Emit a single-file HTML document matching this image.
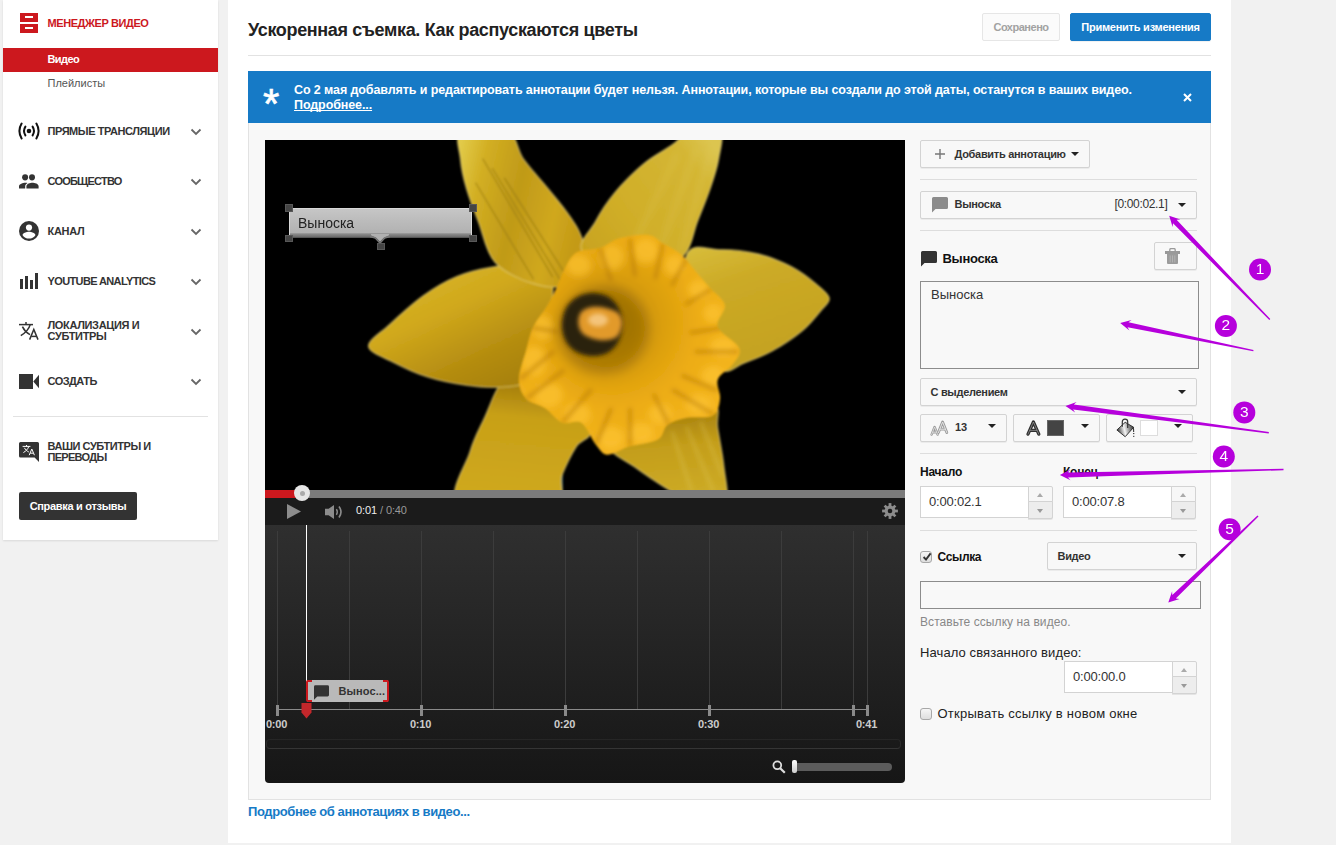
<!DOCTYPE html>
<html lang="ru">
<head>
<meta charset="utf-8">
<title>Аннотации</title>
<style>
*{box-sizing:border-box;margin:0;padding:0}
html,body{width:1336px;height:845px;overflow:hidden}
body{background:#f1f1f1;font-family:"Liberation Sans",sans-serif;font-size:13px;color:#333;position:relative}
.abs{position:absolute}
/* sidebar */
#side{position:absolute;left:3px;top:0;width:215px;height:540px;background:#fff;box-shadow:0 1px 2px rgba(0,0,0,.1)}
.sitem{position:absolute;left:44.5px;font-size:11px;font-weight:bold;color:#333;white-space:nowrap;line-height:11px;letter-spacing:-0.1px}
.sico{position:absolute;left:16px}
.chev{position:absolute;left:187px;width:12px;height:8px}
/* main */
#main{position:absolute;left:228px;top:0;width:1003px;height:843px;background:#fff}
h1{position:absolute;left:20px;top:19px;letter-spacing:-0.34px;font-size:18px;font-weight:bold;color:#222;white-space:nowrap;line-height:22px}
.btn{position:absolute;border:1px solid #d3d3d3;border-radius:2px;background:#f8f8f8;font-size:11px;font-weight:bold;color:#333;white-space:nowrap;box-shadow:0 1px 0 rgba(0,0,0,.05)}
.tri{position:absolute;width:0;height:0;border-left:4px solid transparent;border-right:4px solid transparent;border-top:4px solid #222}
.hr{position:absolute;height:1px;background:#ddd}

#banner{position:absolute;left:20px;top:71px;width:963px;height:52px;background:#167ac6}
#panel{position:absolute;left:20px;top:123px;width:963px;height:677px;background:#f8f8f8;border:1px solid #e2e2e2;border-top:none}

.bt{font-size:11px;font-weight:bold;line-height:13px;color:#333;white-space:nowrap}
.cb{width:12px;height:12px;border:1px solid #a8a8a8;border-radius:3px;background:linear-gradient(#f6f6f6,#dedede)}

#vid{position:absolute;left:265px;top:140px;width:640px;height:350px;background:#000;overflow:hidden}
#prog{position:absolute;left:265px;top:490px;width:640px;height:8px;background:#7b7b7b;z-index:3}
#ctl{position:absolute;left:265px;top:498px;width:640px;height:27px;background:#1b1b1b}
#tline{position:absolute;left:265px;top:525px;width:640px;height:258px;background:linear-gradient(#2f2f2f 0%,#232323 50%,#161616 100%);border-radius:0 0 4px 4px}
.tl{font-size:11px;font-weight:bold;line-height:13px;color:#ccc;text-align:center;white-space:nowrap;letter-spacing:-0.2px}
</style>
</head>
<body>
<div id="side">
<svg class="sico" style="left:17px;top:13px" width="18" height="20" viewBox="0 0 18 20"><rect x="0" y="0" width="18" height="9" fill="#cc181e"/><rect x="0" y="11" width="18" height="9" fill="#cc181e"/><rect x="5" y="3" width="8" height="2" fill="#fff"/><rect x="5" y="14" width="8" height="2" fill="#fff"/></svg>
<div class="sitem" style="letter-spacing:-0.42px;top:18px;color:#cc181e">МЕНЕДЖЕР ВИДЕО</div>
<div class="abs" style="left:0;top:48px;width:215px;height:24px;background:#cc181e"></div>
<div class="abs" style="left:44.5px;top:53px;font-size:11px;font-weight:bold;color:#fff;line-height:13px;letter-spacing:-0.6px">Видео</div>
<div class="abs" style="left:44.5px;top:77px;font-size:11px;color:#555;line-height:13px">Плейлисты</div>

<svg class="sico" style="left:15px;top:122px" width="22" height="18" viewBox="0 0 22 18"><g fill="none" stroke="#111" stroke-width="2" stroke-linecap="round"><path d="M3.6 1.6 Q-0.8 9 3.6 16.4"/><path d="M7.4 4.6 Q4.6 9 7.4 13.4"/><path d="M14.6 4.6 Q17.4 9 14.6 13.4"/><path d="M18.4 1.6 Q22.8 9 18.4 16.4"/></g><circle cx="11" cy="9" r="2.3" fill="#111"/></svg>
<div class="sitem" style="letter-spacing:-0.42px;top:126px">ПРЯМЫЕ ТРАНСЛЯЦИИ</div>
<svg class="chev" style="top:128px" viewBox="0 0 12 8"><path d="M1.5 1.5 L6 6 L10.5 1.5" fill="none" stroke="#666" stroke-width="1.8"/></svg>

<svg class="sico" style="left:16px;top:173.5px" width="20" height="15" viewBox="0 0 20 14.4" preserveAspectRatio="none"><g fill="#333"><circle cx="6.1" cy="3.2" r="3"/><circle cx="13" cy="3.2" r="3"/><path d="M0 14 v-2.2 c0-2.2 4-3.4 6.2-3.4 c0.8 0 1.6 0.1 2.4 0.3 c-1.6 0.9-2.4 1.9-2.4 3.1 V14z"/><path d="M7.4 14 v-2.4 c0-2.2 3.9-3.3 6-3.3 s6.2 1.1 6.2 3.3 V14z"/></g></svg>
<div class="sitem" style="letter-spacing:-0.78px;top:176px">СООБЩЕСТВО</div>
<svg class="chev" style="top:178px" viewBox="0 0 12 8"><path d="M1.5 1.5 L6 6 L10.5 1.5" fill="none" stroke="#666" stroke-width="1.8"/></svg>

<svg class="sico" style="left:16px;top:221px" width="20" height="20" viewBox="0 0 20 20"><circle cx="10" cy="10" r="10" fill="#333"/><circle cx="10" cy="6.6" r="3.1" fill="#fff"/><path d="M3.6 14.2 c0-2.2 4.2-3.4 6.4-3.4 s6.4 1.2 6.4 3.4 c-1.4 2.1-3.7 3.4-6.4 3.4 s-5-1.3-6.4-3.4z" fill="#fff"/></svg>
<div class="sitem" style="letter-spacing:-0.32px;top:226px">КАНАЛ</div>
<svg class="chev" style="top:228px" viewBox="0 0 12 8"><path d="M1.5 1.5 L6 6 L10.5 1.5" fill="none" stroke="#666" stroke-width="1.8"/></svg>

<svg class="sico" style="left:17px;top:273px" width="18" height="16" viewBox="0 0 18 16"><g fill="#333"><rect x="0" y="6" width="3" height="10"/><rect x="5" y="3" width="3" height="13"/><rect x="10" y="7" width="3" height="9"/><rect x="15" y="0" width="3" height="16"/></g></svg>
<div class="sitem" style="letter-spacing:-0.62px;top:276px">YOUTUBE ANALYTICS</div>
<svg class="chev" style="top:278px" viewBox="0 0 12 8"><path d="M1.5 1.5 L6 6 L10.5 1.5" fill="none" stroke="#666" stroke-width="1.8"/></svg>

<svg class="sico" style="left:16px;top:322px" width="20" height="18" viewBox="0 0 20 18"><g fill="none" stroke="#333" stroke-width="1.5"><path d="M0 2.6 H14"/><path d="M7 0 V2.6"/><path d="M11.2 2.6 C10 7 6 11 1.8 13.6"/><path d="M3.4 4.6 C5 8 8 11 11 12.6"/><path d="M10.6 17.6 L14.8 7.4 L19 17.6"/><path d="M12.2 14.4 H17.4"/></g></svg>
<div class="sitem" style="letter-spacing:-0.35px;top:320px;line-height:11px">ЛОКАЛИЗАЦИЯ И<br>СУБТИТРЫ</div>
<svg class="chev" style="top:328px" viewBox="0 0 12 8"><path d="M1.5 1.5 L6 6 L10.5 1.5" fill="none" stroke="#666" stroke-width="1.8"/></svg>

<svg class="sico" style="left:16px;top:374px" width="20" height="15" viewBox="0 0 20 15"><rect x="0" y="0" width="14" height="15" fill="#333"/><path d="M14.3 7.5 L20 0.8 V14.2z" fill="#333"/></svg>
<div class="sitem" style="letter-spacing:-0.52px;top:376px">СОЗДАТЬ</div>
<svg class="chev" style="top:378px" viewBox="0 0 12 8"><path d="M1.5 1.5 L6 6 L10.5 1.5" fill="none" stroke="#666" stroke-width="1.8"/></svg>

<div class="hr" style="left:10px;top:416px;width:195px;background:#e2e2e2"></div>

<svg class="sico" style="left:16px;top:442px" width="20" height="20" viewBox="0 0 20 20"><path d="M1.5 0 H18.5 Q20 0 20 1.5 V20 L15.6 15.6 H1.5 Q0 15.6 0 14.1 V1.5 Q0 0 1.5 0z" fill="#333"/><g fill="none" stroke="#fff" stroke-width="1"><path d="M3.6 4.4 H11.4"/><path d="M7.5 3 V4.4"/><path d="M9.8 4.4 C9 7 7 9 4.4 10.6"/><path d="M5.4 5.8 C6.4 7.6 8 9.2 9.8 10"/><path d="M10.2 13.2 L12.8 7 L15.4 13.2"/><path d="M11.2 11.2 H14.4"/></g></svg>
<div class="sitem" style="letter-spacing:-0.45px;top:441px;line-height:11px">ВАШИ СУБТИТРЫ И<br><span style="letter-spacing:-0.7px">ПЕРЕВОДЫ</span></div>

<div class="abs" style="left:16px;top:492px;width:118px;height:28px;background:#333;border-radius:2px;color:#fff;font-size:11px;font-weight:bold;line-height:28px;text-align:center;white-space:nowrap;letter-spacing:-0.3px">Справка и отзывы</div>
</div>
<div id="main">
<h1>Ускоренная съемка. Как распускаются цветы</h1>
<div class="btn" style="left:754px;top:13px;width:78px;height:28px;line-height:26px;text-align:center;color:#a2a2a2;letter-spacing:-0.48px;font-weight:bold;background:#fbfbfb;border-color:#e6e6e6;box-shadow:none">Сохранено</div>
<div class="btn" style="left:842px;top:13px;width:141px;height:28px;line-height:26px;text-align:center;color:#fff;letter-spacing:-0.24px;background:#167ac6;border-color:#167ac6">Применить изменения</div>
<div class="hr" style="left:20px;top:55px;width:963px;background:#e2e2e2"></div>
<div id="banner">
<div class="abs" style="left:15px;top:11px;font-size:42px;font-weight:normal;line-height:44px;color:#fff;-webkit-text-stroke:0.6px #fff">*</div>
<div class="abs" style="left:46px;top:12px;font-size:12.5px;letter-spacing:-0.1px;font-weight:bold;line-height:15px;color:#fff;white-space:nowrap">Со 2 мая добавлять и редактировать аннотации будет нельзя. Аннотации, которые вы создали до этой даты, останутся в ваших видео.<br><span style="text-decoration:underline;text-decoration-skip-ink:none;text-underline-offset:1px">Подробнее...</span></div>
<svg class="abs" style="left:935px;top:22px" width="9" height="9" viewBox="0 0 9 9"><path d="M1 1 L8 8 M8 1 L1 8" stroke="#fff" stroke-width="2"/></svg>
</div>
<div id="panel">
</div>
<div class="abs" style="left:20px;top:804px;font-size:13px;font-weight:bold;color:#167ac6;white-space:nowrap;line-height:15px;letter-spacing:-0.4px">Подробнее об аннотациях в видео...</div>
</div>


<div id="vid">
<svg class="abs" style="left:0;top:0" width="640" height="350" viewBox="0 0 640 350">
<defs>
<filter id="fb" x="-5%" y="-5%" width="110%" height="110%"><feGaussianBlur stdDeviation="0.9"/></filter>
<filter id="fb3" x="-30%" y="-30%" width="160%" height="160%"><feGaussianBlur stdDeviation="6"/></filter>
<filter id="fb2" x="-20%" y="-20%" width="140%" height="140%"><feGaussianBlur stdDeviation="2"/></filter>
<filter id="fb4" x="-20%" y="-20%" width="140%" height="140%"><feGaussianBlur stdDeviation="3.2"/></filter>
<linearGradient id="g1" x1="0" y1="0.2" x2="1" y2="0.5"><stop offset="0" stop-color="#e2ca48"/><stop offset="0.2" stop-color="#d2ae22"/><stop offset="0.5" stop-color="#c09a18"/><stop offset="0.8" stop-color="#d0a81e"/><stop offset="1" stop-color="#c49a16"/></linearGradient>
<linearGradient id="g2" x1="0" y1="1" x2="1" y2="0.2"><stop offset="0" stop-color="#c6a01c"/><stop offset="0.4" stop-color="#d0ae28"/><stop offset="0.85" stop-color="#d4b634"/><stop offset="1" stop-color="#dcc550"/></linearGradient>
<linearGradient id="g3" x1="0" y1="0" x2="0.4" y2="1"><stop offset="0" stop-color="#d8be3c"/><stop offset="0.35" stop-color="#ccaa26"/><stop offset="1" stop-color="#c4a220"/></linearGradient>
<linearGradient id="g4" x1="0" y1="0" x2="0.7" y2="1"><stop offset="0" stop-color="#dcbc2e"/><stop offset="0.45" stop-color="#d0a81c"/><stop offset="0.8" stop-color="#b48c10"/><stop offset="1" stop-color="#a8820e"/></linearGradient>
<linearGradient id="g5" x1="0.3" y1="0" x2="0.2" y2="1"><stop offset="0" stop-color="#9c7608"/><stop offset="0.3" stop-color="#c8a018"/><stop offset="1" stop-color="#d0aa1e"/></linearGradient>
<linearGradient id="g6" x1="0.5" y1="0" x2="0.6" y2="1"><stop offset="0" stop-color="#a07a0a"/><stop offset="0.4" stop-color="#c49e1a"/><stop offset="1" stop-color="#cfae2a"/></linearGradient>
<radialGradient id="gc" cx="0.42" cy="0.40" r="0.62"><stop offset="0" stop-color="#ac7c08"/><stop offset="0.3" stop-color="#d69b0c"/><stop offset="0.62" stop-color="#ecac14"/><stop offset="1" stop-color="#f5b620"/></radialGradient>
<clipPath id="vc"><rect width="640" height="350"/></clipPath>
<clipPath id="cc"><path d="M293.2 143.7 C296.0 137.7 296.4 134.5 299.4 129.3 C302.4 124.2 305.4 116.2 311.4 112.6 C317.4 109.0 328.1 110.2 335.3 107.8 C342.5 105.4 346.5 100.4 354.5 98.2 C362.5 96.0 376.0 94.1 383.2 94.9 C390.4 95.6 392.0 99.6 397.6 103.0 C403.2 106.3 411.2 110.2 416.8 115.0 C422.4 119.8 426.3 126.1 431.1 131.7 C435.9 137.3 440.7 142.9 445.5 148.5 C450.3 154.1 458.7 158.9 459.9 165.3 C461.1 171.7 450.3 179.6 452.7 186.8 C455.1 194.0 471.9 202.0 474.3 208.4 C476.6 214.8 470.7 220.0 467.1 225.1 C463.5 230.3 454.7 233.9 452.7 239.5 C450.7 245.1 455.9 252.7 455.1 258.7 C454.3 264.7 453.5 272.3 447.9 275.4 C442.3 278.6 429.1 276.2 421.6 277.8 C414.0 279.4 407.2 281.4 402.4 285.0 C397.6 288.6 399.2 295.8 392.8 299.4 C386.4 303.0 372.5 304.0 364.1 306.6 C355.7 309.1 348.1 315.1 342.5 314.7 C336.9 314.3 334.9 309.5 330.5 304.2 C326.1 298.8 321.8 286.2 316.2 282.6 C310.6 279.0 303.0 285.0 297.0 282.6 C291.0 280.2 286.2 272.3 280.2 268.3 C274.3 264.3 265.5 263.5 261.1 258.7 C256.7 253.9 253.9 247.5 253.9 239.5 C253.9 231.5 258.7 219.6 261.1 210.8 C263.5 202.0 264.7 194.4 268.3 186.8 C271.9 179.2 278.5 172.5 282.6 165.3 C286.8 158.1 290.4 149.7 293.2 143.7z"/></clipPath>
<clipPath id="c1"><path d="M196.4 -9.6 C188.7 -4.8 194.7 9.6 195.4 19.2 C196.2 28.7 198.2 37.5 201.2 47.9 C204.2 58.3 208.4 69.1 213.2 81.4 C218.0 93.8 220.8 111.8 229.9 122.2 C239.1 132.5 256.3 140.1 268.3 143.7 C280.2 147.3 293.7 149.3 301.8 143.7 C309.9 138.1 314.9 118.6 317.1 110.2 C319.4 101.8 317.8 99.8 315.2 93.4 C312.7 87.0 307.2 79.4 301.8 71.9 C296.4 64.3 289.8 56.7 282.6 47.9 C275.4 39.1 265.5 28.7 258.7 19.2 C251.9 9.6 252.3 -4.8 241.9 -9.6 C231.5 -14.4 204.2 -14.4 196.4 -9.6z"/></clipPath>
<clipPath id="c6"><path d="M344.9 306.6 C343.7 313.4 360.9 320.6 371.3 328.1 C381.6 335.7 396.4 345.3 407.2 352.1 C418.0 358.9 427.0 366.9 435.9 368.9 C444.9 370.9 457.0 371.3 460.8 364.1 C464.7 356.9 460.3 338.5 458.9 325.7 C457.6 313.0 454.1 297.4 452.7 287.4 C451.3 277.4 456.3 269.1 450.3 265.9 C444.3 262.7 428.7 264.7 416.8 268.3 C404.8 271.9 390.4 281.0 378.4 287.4 C366.5 293.8 346.1 299.8 344.9 306.6z"/></clipPath>
<clipPath id="c2"><path d="M318.6 112.6 C309.8 103.8 325.3 91.4 330.5 81.4 C335.7 71.5 341.7 62.3 349.7 52.7 C357.7 43.1 368.9 31.9 378.4 24.0 C388.0 16.0 399.2 10.4 407.2 4.8 C415.2 -0.8 418.4 -7.2 426.3 -9.6 C434.3 -12.0 450.5 -14.4 455.1 -9.6 C459.6 -4.8 455.2 9.6 453.7 19.2 C452.1 28.7 449.0 37.5 445.5 47.9 C442.0 58.3 437.0 70.3 432.6 81.4 C428.2 92.6 427.4 106.2 419.2 115.0 C410.9 123.8 400.0 134.5 383.2 134.1 C366.5 133.7 327.3 121.4 318.6 112.6z"/></clipPath>
</defs>
<rect width="640" height="350" fill="#000"/>
<g clip-path="url(#vc)"><g filter="url(#fb)">
<rect x="293" y="334" width="5" height="20" fill="#2a5562"/>
<path d="M237.1 241.9 C229.8 249.1 224.8 266.3 219.4 277.8 C214.1 289.4 209.3 297.0 205.0 311.4 C200.8 325.7 180.3 355.3 194.0 364.1 C207.7 372.9 270.3 368.9 287.4 364.1 C304.6 359.3 293.0 344.9 297.0 335.3 C301.0 325.7 306.7 313.9 311.4 306.6 C316.0 299.2 327.2 299.2 324.8 291.3 C322.4 283.3 307.2 268.1 297.0 258.7 C286.8 249.3 273.5 237.5 263.5 234.7 C253.5 231.9 244.5 234.7 237.1 241.9z" fill="url(#g5)" stroke="#e8d67e" stroke-opacity="0.55" stroke-width="1.3"/>
<path d="M344.9 306.6 C343.7 313.4 360.9 320.6 371.3 328.1 C381.6 335.7 396.4 345.3 407.2 352.1 C418.0 358.9 427.0 366.9 435.9 368.9 C444.9 370.9 457.0 371.3 460.8 364.1 C464.7 356.9 460.3 338.5 458.9 325.7 C457.6 313.0 454.1 297.4 452.7 287.4 C451.3 277.4 456.3 269.1 450.3 265.9 C444.3 262.7 428.7 264.7 416.8 268.3 C404.8 271.9 390.4 281.0 378.4 287.4 C366.5 293.8 346.1 299.8 344.9 306.6z" fill="url(#g6)" stroke="#e8d67e" stroke-opacity="0.55" stroke-width="1.3"/>
<g clip-path="url(#c6)" filter="url(#fb2)"><path d="M421.6 287.4 L447.9 350.2" stroke="#e2cc5c" stroke-width="2.4" stroke-opacity="0.45" stroke-linecap="round" fill="none"/><path d="M407.2 292.2 L426.3 350.2" stroke="#e2cc5c" stroke-width="2.4" stroke-opacity="0.45" stroke-linecap="round" fill="none"/><path d="M435.9 282.6 L457.5 335.3" stroke="#e2cc5c" stroke-width="2.4" stroke-opacity="0.45" stroke-linecap="round" fill="none"/></g>
<path d="M103.5 206.5 C102.7 200.1 115.4 192.9 124.6 184.4 C133.7 176.0 146.9 163.7 158.1 155.7 C169.3 147.7 180.4 141.2 191.6 136.5 C202.8 131.8 214.0 129.3 225.1 127.4 C236.3 125.6 248.3 123.2 258.7 125.5 C269.1 127.8 284.2 128.7 287.4 141.3 C290.6 153.9 281.8 184.8 277.8 201.2 C273.9 217.6 270.7 231.9 263.5 239.5 C256.3 247.2 245.1 246.2 234.7 247.2 C224.4 248.1 213.2 246.9 201.2 245.3 C189.2 243.6 174.9 240.9 162.9 237.1 C150.9 233.4 139.2 227.9 129.3 222.8 C119.4 217.6 104.3 212.9 103.5 206.5z" fill="url(#g4)" stroke="#e8d67e" stroke-opacity="0.55" stroke-width="1.3"/>
<path d="M421.6 115.0 C427.1 101.3 443.1 109.9 455.1 109.7 C467.1 109.5 481.4 111.1 493.4 114.0 C505.4 116.9 517.4 122.0 526.9 126.9 C536.5 131.9 544.7 138.5 550.9 143.7 C557.1 148.9 563.5 153.5 564.3 158.1 C565.1 162.6 560.3 165.4 555.7 171.0 C551.1 176.6 544.5 185.0 536.5 191.6 C528.5 198.2 517.4 205.5 507.8 210.8 C498.2 216.0 487.8 220.0 479.0 223.2 C470.3 226.4 464.7 235.2 455.1 229.9 C445.5 224.7 427.1 210.8 421.6 191.6 C416.0 172.5 416.0 128.6 421.6 115.0z" fill="url(#g3)" stroke="#e8d67e" stroke-opacity="0.55" stroke-width="1.3"/>
<path d="M196.4 -9.6 C188.7 -4.8 194.7 9.6 195.4 19.2 C196.2 28.7 198.2 37.5 201.2 47.9 C204.2 58.3 208.4 69.1 213.2 81.4 C218.0 93.8 220.8 111.8 229.9 122.2 C239.1 132.5 256.3 140.1 268.3 143.7 C280.2 147.3 293.7 149.3 301.8 143.7 C309.9 138.1 314.9 118.6 317.1 110.2 C319.4 101.8 317.8 99.8 315.2 93.4 C312.7 87.0 307.2 79.4 301.8 71.9 C296.4 64.3 289.8 56.7 282.6 47.9 C275.4 39.1 265.5 28.7 258.7 19.2 C251.9 9.6 252.3 -4.8 241.9 -9.6 C231.5 -14.4 204.2 -14.4 196.4 -9.6z" fill="url(#g1)" stroke="#e8d67e" stroke-opacity="0.55" stroke-width="1.3"/>
<g clip-path="url(#c1)"><path d="M218.0 19.2 L287.4 136.5" stroke="#8f7410" stroke-width="1.6" stroke-opacity="0.5" stroke-linecap="round" fill="none"/><path d="M227.5 28.7 L294.6 138.9" stroke="#8f7410" stroke-width="1.6" stroke-opacity="0.5" stroke-linecap="round" fill="none"/><path d="M239.5 38.3 L301.8 136.5" stroke="#8f7410" stroke-width="1.6" stroke-opacity="0.5" stroke-linecap="round" fill="none"/><path d="M210.8 43.1 L268.3 138.9" stroke="#8f7410" stroke-width="1.6" stroke-opacity="0.5" stroke-linecap="round" fill="none"/></g>
<path d="M318.6 112.6 C309.8 103.8 325.3 91.4 330.5 81.4 C335.7 71.5 341.7 62.3 349.7 52.7 C357.7 43.1 368.9 31.9 378.4 24.0 C388.0 16.0 399.2 10.4 407.2 4.8 C415.2 -0.8 418.4 -7.2 426.3 -9.6 C434.3 -12.0 450.5 -14.4 455.1 -9.6 C459.6 -4.8 455.2 9.6 453.7 19.2 C452.1 28.7 449.0 37.5 445.5 47.9 C442.0 58.3 437.0 70.3 432.6 81.4 C428.2 92.6 427.4 106.2 419.2 115.0 C410.9 123.8 400.0 134.5 383.2 134.1 C366.5 133.7 327.3 121.4 318.6 112.6z" fill="url(#g2)" stroke="#e8d67e" stroke-opacity="0.55" stroke-width="1.3"/>
<g clip-path="url(#c2)" filter="url(#fb4)"><path d="M445.5 9.6 L416.8 110.2" stroke="#e3cf62" stroke-width="3" stroke-opacity="0.35" stroke-linecap="round" fill="none"/><path d="M431.1 9.6 L392.8 115.0" stroke="#e3cf62" stroke-width="3" stroke-opacity="0.35" stroke-linecap="round" fill="none"/><path d="M412.0 14.4 L364.1 115.0" stroke="#e3cf62" stroke-width="3" stroke-opacity="0.35" stroke-linecap="round" fill="none"/></g>
<path d="M293.2 143.7 C296.0 137.7 296.4 134.5 299.4 129.3 C302.4 124.2 305.4 116.2 311.4 112.6 C317.4 109.0 328.1 110.2 335.3 107.8 C342.5 105.4 346.5 100.4 354.5 98.2 C362.5 96.0 376.0 94.1 383.2 94.9 C390.4 95.6 392.0 99.6 397.6 103.0 C403.2 106.3 411.2 110.2 416.8 115.0 C422.4 119.8 426.3 126.1 431.1 131.7 C435.9 137.3 440.7 142.9 445.5 148.5 C450.3 154.1 458.7 158.9 459.9 165.3 C461.1 171.7 450.3 179.6 452.7 186.8 C455.1 194.0 471.9 202.0 474.3 208.4 C476.6 214.8 470.7 220.0 467.1 225.1 C463.5 230.3 454.7 233.9 452.7 239.5 C450.7 245.1 455.9 252.7 455.1 258.7 C454.3 264.7 453.5 272.3 447.9 275.4 C442.3 278.6 429.1 276.2 421.6 277.8 C414.0 279.4 407.2 281.4 402.4 285.0 C397.6 288.6 399.2 295.8 392.8 299.4 C386.4 303.0 372.5 304.0 364.1 306.6 C355.7 309.1 348.1 315.1 342.5 314.7 C336.9 314.3 334.9 309.5 330.5 304.2 C326.1 298.8 321.8 286.2 316.2 282.6 C310.6 279.0 303.0 285.0 297.0 282.6 C291.0 280.2 286.2 272.3 280.2 268.3 C274.3 264.3 265.5 263.5 261.1 258.7 C256.7 253.9 253.9 247.5 253.9 239.5 C253.9 231.5 258.7 219.6 261.1 210.8 C263.5 202.0 264.7 194.4 268.3 186.8 C271.9 179.2 278.5 172.5 282.6 165.3 C286.8 158.1 290.4 149.7 293.2 143.7z" fill="url(#gc)"/>
<g clip-path="url(#cc)"><g filter="url(#fb4)"><ellipse cx="313.8" cy="125.5" rx="12.5" ry="10.5" fill="#ffc636" fill-opacity="0.6"/><ellipse cx="347.3" cy="117.4" rx="11.5" ry="12.5" fill="#ffc636" fill-opacity="0.6"/><ellipse cx="380.8" cy="111.1" rx="12.5" ry="12.5" fill="#ffc636" fill-opacity="0.6"/><ellipse cx="409.6" cy="125.5" rx="10.5" ry="10.5" fill="#ffc636" fill-opacity="0.6"/><ellipse cx="433.5" cy="149.5" rx="10.5" ry="9.6" fill="#ffc636" fill-opacity="0.6"/><ellipse cx="447.9" cy="173.4" rx="9.6" ry="9.6" fill="#ffc636" fill-opacity="0.6"/><ellipse cx="457.5" cy="206.9" rx="12.5" ry="9.6" fill="#ffc636" fill-opacity="0.6"/><ellipse cx="447.9" cy="235.7" rx="11.5" ry="9.6" fill="#ffc636" fill-opacity="0.6"/><ellipse cx="433.5" cy="264.4" rx="12.5" ry="9.6" fill="#ffc636" fill-opacity="0.6"/><ellipse cx="395.2" cy="274.0" rx="11.5" ry="10.5" fill="#ffc636" fill-opacity="0.6"/><ellipse cx="376.0" cy="293.2" rx="12.5" ry="10.5" fill="#ffc636" fill-opacity="0.6"/><ellipse cx="345.9" cy="298.0" rx="12.5" ry="11.5" fill="#ffc636" fill-opacity="0.6"/><ellipse cx="312.3" cy="274.0" rx="13.4" ry="11.5" fill="#ffc636" fill-opacity="0.6"/><ellipse cx="283.6" cy="254.9" rx="14.4" ry="12.5" fill="#ffc636" fill-opacity="0.6"/><ellipse cx="269.2" cy="221.3" rx="12.5" ry="15.3" fill="#ffc636" fill-opacity="0.6"/><ellipse cx="277.8" cy="187.8" rx="10.5" ry="12.5" fill="#ffc636" fill-opacity="0.6"/></g><g filter="url(#fb2)"><path d="M335.3 109.2 L345.9 139.9" stroke="#a86c04" stroke-width="3.2" stroke-opacity="0.55" stroke-linecap="round" fill="none"/><path d="M365.0 99.6 L369.8 135.1" stroke="#a86c04" stroke-width="3.2" stroke-opacity="0.55" stroke-linecap="round" fill="none"/><path d="M397.6 104.4 L390.4 138.0" stroke="#a86c04" stroke-width="3.2" stroke-opacity="0.55" stroke-linecap="round" fill="none"/><path d="M421.6 118.8 L407.2 144.7" stroke="#a86c04" stroke-width="3.2" stroke-opacity="0.55" stroke-linecap="round" fill="none"/><path d="M445.5 149.5 L421.6 163.8" stroke="#a86c04" stroke-width="3.2" stroke-opacity="0.55" stroke-linecap="round" fill="none"/><path d="M457.5 187.8 L426.3 192.6" stroke="#a86c04" stroke-width="3.2" stroke-opacity="0.55" stroke-linecap="round" fill="none"/><path d="M471.9 211.7 L431.1 211.7" stroke="#a86c04" stroke-width="3.2" stroke-opacity="0.55" stroke-linecap="round" fill="none"/><path d="M451.3 250.1 L417.7 235.7" stroke="#a86c04" stroke-width="3.2" stroke-opacity="0.55" stroke-linecap="round" fill="none"/><path d="M447.9 274.0 L408.1 250.1" stroke="#a86c04" stroke-width="3.2" stroke-opacity="0.55" stroke-linecap="round" fill="none"/><path d="M403.4 283.6 L389.0 254.9" stroke="#a86c04" stroke-width="3.2" stroke-opacity="0.55" stroke-linecap="round" fill="none"/><path d="M365.0 305.6 L365.0 269.2" stroke="#a86c04" stroke-width="3.2" stroke-opacity="0.55" stroke-linecap="round" fill="none"/><path d="M331.5 302.8 L345.9 269.2" stroke="#a86c04" stroke-width="3.2" stroke-opacity="0.55" stroke-linecap="round" fill="none"/><path d="M298.0 281.7 L325.7 250.1" stroke="#a86c04" stroke-width="3.2" stroke-opacity="0.55" stroke-linecap="round" fill="none"/><path d="M262.5 257.7 L298.0 230.9" stroke="#a86c04" stroke-width="3.2" stroke-opacity="0.55" stroke-linecap="round" fill="none"/><path d="M255.8 238.6 L288.4 211.7" stroke="#a86c04" stroke-width="3.2" stroke-opacity="0.55" stroke-linecap="round" fill="none"/><path d="M268.3 187.8 L292.2 191.6" stroke="#a86c04" stroke-width="3.2" stroke-opacity="0.55" stroke-linecap="round" fill="none"/></g>
<ellipse cx="338" cy="190" rx="46" ry="44" fill="#8a6206" fill-opacity="0.55" filter="url(#fb3)"/>
</g>
</g>
<path d="M327 153 C345 152 358 166 357 186 C356 206 344 217 326 216 C308 215 296 202 297 183 C298 165 310 154 327 153z" fill="#2a2008" filter="url(#fb2)"/>
<path d="M316 172 C324 164 340 166 352 172 C360 178 358 190 352 197 C342 203 326 200 318 194 C312 188 312 178 316 172z" fill="#e29a2c" filter="url(#fb2)"/>
<ellipse cx="333" cy="180" rx="10" ry="6.5" fill="#f4c47a" filter="url(#fb2)"/>
</g>
</svg>
<div class="abs" style="left:24px;top:68px;width:183px;height:30px;border-radius:3px;background:linear-gradient(#c6c6c6 0%,#bcbcbc 40%,#b2b2b2 84%,#8c8c8c 89%,#6a6a6a 100%);border:1px solid #d8d8d8;border-bottom-color:#555"></div>
<svg class="abs" style="left:104.3px;top:94px" width="22" height="10" viewBox="0 0 22 10"><path d="M2 0 H20 V1.2 L15.2 3.4 L11 7.8 L6.8 3.4 L2 1.2z" fill="#b0b0b0"/><path d="M1 2.4 L6.4 4 L11 8.8 L15.6 4 L21 2.4" stroke="#787878" stroke-width="1.7" fill="none" stroke-linejoin="round"/></svg>
<div class="abs" style="left:33px;top:74px;font-size:14px;line-height:18px;color:#222;white-space:nowrap">Выноска</div>
<div class="abs" style="left:20px;top:64px;width:7.6px;height:7.6px;background:#444;border:1px solid #585858"></div><div class="abs" style="left:204px;top:64px;width:7.6px;height:7.6px;background:#444;border:1px solid #585858"></div><div class="abs" style="left:20px;top:94.5px;width:7.6px;height:7.6px;background:#444;border:1px solid #585858"></div><div class="abs" style="left:204px;top:94.5px;width:7.6px;height:7.6px;background:#444;border:1px solid #585858"></div><div class="abs" style="left:112px;top:102.5px;width:7.6px;height:7.6px;background:#444;border:1px solid #585858"></div>
</div>
<div id="prog"><div class="abs" style="left:0;top:0;width:32px;height:8px;background:#cc181e"></div>
<div class="abs" style="left:29px;top:-5px;width:16px;height:16px;border-radius:8px;background:#e6e6e6"></div>
<div class="abs" style="left:34.5px;top:0.5px;width:5px;height:5px;border-radius:3px;background:#aaa"></div>
</div>
<div id="ctl">
<svg class="abs" style="left:22px;top:6px" width="14" height="15" viewBox="0 0 14 15"><path d="M0 0 L14 7.5 L0 15z" fill="#8c8c8c"/></svg>
<svg class="abs" style="left:60px;top:7px" width="19" height="14" viewBox="0 0 19 14"><path d="M0 3.8 H3.6 L9 0 V14 L3.6 10.2 H0z" fill="#8c8c8c"/><path d="M11.4 4.2 Q13.2 7 11.4 9.8" fill="none" stroke="#8c8c8c" stroke-width="1.4"/><path d="M14 1.6 Q18 7 14 12.4" fill="none" stroke="#8c8c8c" stroke-width="1.6"/></svg>
<div class="abs" style="left:91px;top:6px;font-size:11px;line-height:13px;color:#eee;white-space:nowrap;letter-spacing:-0.1px">0:01 <span style="color:#999">/ 0:40</span></div>
<svg class="abs" style="left:617px;top:5px" width="16" height="16" viewBox="-8 -8 16 16"><g fill="#8c8c8c"><circle r="5.4"/><rect x="-1.4" y="-7.9" width="2.8" height="15.8"/><rect x="-7.9" y="-1.4" width="15.8" height="2.8"/><g transform="rotate(45)"><rect x="-1.4" y="-7.6" width="2.8" height="15.2"/><rect x="-7.6" y="-1.4" width="15.2" height="2.8"/></g></g><circle r="2.3" fill="#1b1b1b"/></svg>
</div>
<div id="tline">
<div class="abs" style="left:12px;top:6px;width:1px;height:179px;background:#3c3c3c"></div><div class="abs" style="left:84px;top:6px;width:1px;height:179px;background:#3c3c3c"></div><div class="abs" style="left:156px;top:6px;width:1px;height:179px;background:#3c3c3c"></div><div class="abs" style="left:228px;top:6px;width:1px;height:179px;background:#3c3c3c"></div><div class="abs" style="left:300px;top:6px;width:1px;height:179px;background:#3c3c3c"></div><div class="abs" style="left:372px;top:6px;width:1px;height:179px;background:#3c3c3c"></div><div class="abs" style="left:444px;top:6px;width:1px;height:179px;background:#3c3c3c"></div><div class="abs" style="left:516px;top:6px;width:1px;height:179px;background:#3c3c3c"></div><div class="abs" style="left:588px;top:6px;width:1px;height:179px;background:#3c3c3c"></div><div class="abs" style="left:602px;top:6px;width:1px;height:179px;background:#3c3c3c"></div>
<div class="abs" style="left:41px;top:0;width:1.3px;height:158px;background:#fff"></div>
<div class="abs" style="left:12px;top:184px;width:591px;height:1.3px;background:#8a8a8a"></div>
<div class="abs" style="left:11px;top:180px;width:3px;height:11px;background:#8a8a8a"></div><div class="abs" style="left:155px;top:180px;width:3px;height:11px;background:#8a8a8a"></div><div class="abs" style="left:299px;top:180px;width:3px;height:11px;background:#8a8a8a"></div><div class="abs" style="left:443px;top:180px;width:3px;height:11px;background:#8a8a8a"></div><div class="abs" style="left:587px;top:180px;width:3px;height:11px;background:#8a8a8a"></div><div class="abs" style="left:601px;top:180px;width:3px;height:11px;background:#8a8a8a"></div>
<div class="abs tl" style="top:193px;left:-8.5px;width:40px">0:00</div><div class="abs tl" style="top:193px;left:135.5px;width:40px">0:10</div><div class="abs tl" style="top:193px;left:279.5px;width:40px">0:20</div><div class="abs tl" style="top:193px;left:423.5px;width:40px">0:30</div><div class="abs tl" style="top:193px;left:581.5px;width:40px">0:41</div>
<div class="abs" style="left:41px;top:155px;width:83px;height:22px;background:#b9b9b9;border-radius:2px;border-left:2px solid #cc181e;border-right:2px solid #cc181e"></div>
<div class="abs" style="left:43px;top:155px;width:79px;height:22px;border-top:0;background:linear-gradient(90deg,#cc181e 4px,transparent 4px,transparent 75px,#cc181e 75px) top/100% 2px no-repeat,linear-gradient(90deg,#cc181e 4px,transparent 4px,transparent 75px,#cc181e 75px) bottom/100% 2px no-repeat"></div>
<svg class="abs" style="left:48.5px;top:159.5px" width="15" height="15" viewBox="0 0 16 15.5"><path d="M1.5 0 H14.5 Q16 0 16 1.5 V10.5 Q16 12 14.5 12 H3.5 L0 15.5 V1.5 Q0 0 1.5 0z" fill="#333"/></svg>
<div class="abs" style="left:73.5px;top:160px;font-size:11px;font-weight:bold;line-height:13px;color:#333;white-space:nowrap;letter-spacing:0.1px">Вынос...</div>
<svg class="abs" style="left:36px;top:177.5px" width="11" height="16" viewBox="0 0 11 16"><path d="M0.5 0 H10.5 V9.5 L5.5 15.5 L0.5 9.5z" fill="#c3272b"/></svg>
<div class="abs" style="left:1px;top:214px;width:635px;height:10px;border:1px solid #2c2c2c;border-top-color:#262626;border-bottom-color:#353535;border-radius:4px"></div>
<svg class="abs" style="left:507px;top:235px" width="14" height="14" viewBox="0 0 14 14"><circle cx="5.3" cy="5.3" r="3.9" fill="none" stroke="#ddd" stroke-width="1.8"/><path d="M8.2 8.2 L12.8 12.8" stroke="#ddd" stroke-width="2.2"/></svg>
<div class="abs" style="left:528px;top:237.5px;width:99px;height:8px;border-radius:4px;background:#5c5c5c"></div>
<div class="abs" style="left:526.5px;top:234.5px;width:5.5px;height:13px;border-radius:2px;background:linear-gradient(#fff,#ccc)"></div>
</div>
<div id="rp">
<div class="btn" style="left:920px;top:140px;width:170px;height:28px"></div>
<svg class="abs" style="left:935px;top:149px" width="10" height="10" viewBox="0 0 10 10"><path d="M5 0 V10 M0 5 H10" stroke="#777" stroke-width="1.4"/></svg>
<div class="abs bt" style="left:954.5px;top:148px;letter-spacing:-0.3px">Добавить аннотацию</div>
<div class="tri" style="left:1071px;top:151.5px"></div>
<div class="hr" style="left:920px;top:179px;width:277px"></div>

<div class="btn" style="left:920px;top:191px;width:277px;height:28px"></div>
<svg class="abs" style="left:932px;top:197px" width="16" height="15.5" viewBox="0 0 16 15.5"><path d="M1.5 0 H14.5 Q16 0 16 1.5 V10.5 Q16 12 14.5 12 H3.5 L0 15.5 V1.5 Q0 0 1.5 0z" fill="#8c8c8c"/></svg>
<div class="abs bt" style="left:954.5px;top:198px;letter-spacing:-0.3px">Выноска</div>
<div class="abs" style="left:1114.5px;top:196.5px;font-size:12px;line-height:14px;color:#333;white-space:nowrap;letter-spacing:-0.35px">[0:00:02.1]</div>
<div class="tri" style="left:1178px;top:203px"></div>
<div class="hr" style="left:920px;top:230px;width:277px"></div>

<svg class="abs" style="left:921px;top:251px" width="16" height="15.5" viewBox="0 0 16 15.5"><path d="M1.5 0 H14.5 Q16 0 16 1.5 V10.5 Q16 12 14.5 12 H3.5 L0 15.5 V1.5 Q0 0 1.5 0z" fill="#333"/></svg>
<div class="abs" style="left:942.5px;top:251px;font-size:13px;font-weight:bold;line-height:15px;color:#111;white-space:nowrap;letter-spacing:-0.3px">Выноска</div>
<div class="btn" style="left:1154px;top:242px;width:43px;height:28px"></div>
<svg class="abs" style="left:1165px;top:248px" width="15" height="16" viewBox="0 0 15 16"><path d="M4.8 3 V1.8 Q4.8 0.6 6 0.6 H9 Q10.2 0.6 10.2 1.8 V3" fill="none" stroke="#999" stroke-width="1.3"/><rect x="0" y="3" width="15" height="3" fill="#999"/><path d="M2 6 H13 V15 Q13 16 12 16 H3 Q2 16 2 15z" fill="#9b9b9b"/><path d="M5.2 7.4 V14.4 M7.5 7.4 V14.4 M9.8 7.4 V14.4" stroke="#b4b4b4" stroke-width="0.9"/></svg>

<div class="abs" style="left:920px;top:281px;width:279px;height:88px;border:1px solid #8c8c8c;background:#f8f8f8;font-size:13px;line-height:15px;padding:5px 0 0 10px;color:#333">Выноска</div>

<div class="btn" style="left:920px;top:378px;width:277px;height:28px"></div>
<div class="abs bt" style="left:930.5px;top:386px;letter-spacing:-0.3px">С выделением</div>
<div class="tri" style="left:1178px;top:390px"></div>

<div class="btn" style="left:920px;top:414px;width:87px;height:28px"></div>
<svg class="abs" style="left:930px;top:420px" width="20" height="16" viewBox="0 0 20 16"><g fill="none" stroke-linejoin="round" stroke-linecap="round"><path d="M1.6 14.6 L4.6 7 L7.6 14.6 M2.8 12.2 H6.4" stroke="#9a9a9a" stroke-width="2.4"/><path d="M8.4 12.6 L12.6 2 L16.8 12.6 M10 9.2 H15.2" stroke="#9a9a9a" stroke-width="2.8"/><path d="M1.6 14.6 L4.6 7 L7.6 14.6 M2.8 12.2 H6.4" stroke="#e4e4e4" stroke-width="0.8"/><path d="M8.4 12.6 L12.6 2 L16.8 12.6 M10 9.2 H15.2" stroke="#e4e4e4" stroke-width="1"/></g></svg>
<div class="abs" style="left:955px;top:421px;font-size:11px;line-height:13px;color:#333;font-weight:bold;letter-spacing:-0.2px">13</div>
<div class="tri" style="left:988px;top:424px"></div>

<div class="btn" style="left:1013px;top:414px;width:87px;height:28px"></div>
<svg class="abs" style="left:1026px;top:420px" width="15" height="16" viewBox="0 0 15 16"><g fill="none" stroke-linejoin="round" stroke-linecap="round"><path d="M2 14.2 L7.4 2 L12.8 14.2 M4 10.4 H10.8" stroke="#2e2e2e" stroke-width="3.2"/><path d="M2 14.2 L7.4 2 L12.8 14.2 M4 10.4 H10.8" stroke="#b8b8b8" stroke-width="0.55"/></g></svg>
<div class="abs" style="left:1047px;top:420px;width:17px;height:16px;background:#444;border:1px solid #666"></div>
<div class="tri" style="left:1081px;top:424px"></div>

<div class="btn" style="left:1106px;top:414px;width:87px;height:28px"></div>
<svg class="abs" style="left:1116px;top:418px" width="20" height="20" viewBox="0 0 20 20"><defs><linearGradient id="bkg" x1="0" y1="0.6" x2="1" y2="0.4"><stop offset="0" stop-color="#2a2a2a"/><stop offset="0.45" stop-color="#f4f4f4"/><stop offset="0.75" stop-color="#8a8a8a"/><stop offset="1" stop-color="#3a3a3a"/></linearGradient></defs><path d="M9.2 4.3 L17.7 9.3 L9.2 18.7 L0.9 12z" fill="url(#bkg)" stroke="#333" stroke-width="1"/><path d="M6.3 8.8 V3.8 Q6.3 1.2 9 1.2 Q11.7 1.2 11.7 3.8 V10" fill="none" stroke="#333" stroke-width="1.2"/><path d="M17.3 9 Q18.4 10.4 18.2 14 L17.2 14 Q17.4 11 16.6 10z" fill="#222"/><rect x="17.2" y="15" width="1.1" height="1.1" fill="#222"/><rect x="17.2" y="17.8" width="1.1" height="1.1" fill="#222"/></svg>
<div class="abs" style="left:1140px;top:420px;width:18px;height:16px;background:#fff;border:1px solid #ddd"></div>
<div class="tri" style="left:1174px;top:424px"></div>
<div class="hr" style="left:920px;top:453px;width:277px"></div>

<div class="abs" style="left:920px;top:464.5px;font-size:12px;font-weight:bold;line-height:14px;color:#111;letter-spacing:-0.25px">Начало</div>
<div class="abs" style="left:1063px;top:464.5px;font-size:12px;font-weight:bold;line-height:14px;color:#111;letter-spacing:-0.25px">Конец</div>
<div class="abs" style="left:920px;top:486px;width:109px;height:32px;background:#fff;border:1px solid #d3d3d3;font-size:13px;line-height:30px;padding-left:8px;color:#333;white-space:nowrap;letter-spacing:-0.2px">0:00:02.1</div><div class="abs" style="left:1028px;top:486px;width:25px;height:16px;background:#f7f7f7;border:1px solid #d3d3d3;border-radius:0 2px 0 0"></div><div class="abs" style="left:1028px;top:501px;width:25px;height:17.5px;background:#ededed;border:1px solid #d3d3d3;border-radius:0 0 2px 0;box-shadow:0 1px 0 rgba(0,0,0,.08)"></div><div class="abs" style="left:1037px;top:492.5px;width:0;height:0;border-left:3px solid transparent;border-right:3px solid transparent;border-bottom:4px solid #aaa"></div><div class="abs" style="left:1037px;top:509px;width:0;height:0;border-left:3px solid transparent;border-right:3px solid transparent;border-top:4px solid #999"></div>
<div class="abs" style="left:1063px;top:486px;width:109px;height:32px;background:#fff;border:1px solid #d3d3d3;font-size:13px;line-height:30px;padding-left:8px;color:#333;white-space:nowrap;letter-spacing:-0.2px">0:00:07.8</div><div class="abs" style="left:1171px;top:486px;width:25px;height:16px;background:#f7f7f7;border:1px solid #d3d3d3;border-radius:0 2px 0 0"></div><div class="abs" style="left:1171px;top:501px;width:25px;height:17.5px;background:#ededed;border:1px solid #d3d3d3;border-radius:0 0 2px 0;box-shadow:0 1px 0 rgba(0,0,0,.08)"></div><div class="abs" style="left:1180px;top:492.5px;width:0;height:0;border-left:3px solid transparent;border-right:3px solid transparent;border-bottom:4px solid #aaa"></div><div class="abs" style="left:1180px;top:509px;width:0;height:0;border-left:3px solid transparent;border-right:3px solid transparent;border-top:4px solid #999"></div>
<div class="hr" style="left:920px;top:530px;width:277px"></div>

<div class="abs cb" style="left:920px;top:550.5px"><svg width="10" height="10" viewBox="0 0 10 10" style="position:absolute;left:0.5px;top:0"><path d="M1.6 5 L4 7.6 L8.6 1.4" fill="none" stroke="#333" stroke-width="1.9"/></svg></div>
<div class="abs" style="left:937.5px;top:549.5px;font-size:12px;font-weight:bold;line-height:14px;color:#111;letter-spacing:-0.35px">Ссылка</div>
<div class="btn" style="left:1047px;top:542px;width:150px;height:28px"></div>
<div class="abs bt" style="left:1057.5px;top:550px;letter-spacing:-0.3px">Видео</div>
<div class="tri" style="left:1178px;top:554px"></div>

<div class="abs" style="left:920px;top:581px;width:281px;height:28px;border:1px solid #8c8c8c;background:#f8f8f8"></div>
<div class="abs" style="left:920px;top:615px;font-size:12px;line-height:14px;color:#888;white-space:nowrap;letter-spacing:0.07px">Вставьте ссылку на видео.</div>
<div class="abs" style="left:920px;top:645px;font-size:13px;line-height:15px;color:#222;white-space:nowrap;letter-spacing:0.1px">Начало связанного видео:</div>
<div class="abs" style="left:1064px;top:661px;width:109px;height:32px;background:#fff;border:1px solid #d3d3d3;font-size:13px;line-height:30px;padding-left:8px;color:#333;white-space:nowrap;letter-spacing:-0.2px">0:00:00.0</div><div class="abs" style="left:1172px;top:661px;width:25px;height:16px;background:#f7f7f7;border:1px solid #d3d3d3;border-radius:0 2px 0 0"></div><div class="abs" style="left:1172px;top:676px;width:25px;height:17.5px;background:#ededed;border:1px solid #d3d3d3;border-radius:0 0 2px 0;box-shadow:0 1px 0 rgba(0,0,0,.08)"></div><div class="abs" style="left:1181px;top:667.5px;width:0;height:0;border-left:3px solid transparent;border-right:3px solid transparent;border-bottom:4px solid #aaa"></div><div class="abs" style="left:1181px;top:684px;width:0;height:0;border-left:3px solid transparent;border-right:3px solid transparent;border-top:4px solid #999"></div>
<div class="abs cb" style="left:920px;top:707.5px"></div>
<div class="abs" style="left:937.5px;top:706px;font-size:13px;line-height:15px;color:#222;white-space:nowrap;letter-spacing:0.24px">Открывать ссылку в новом окне</div>
</div>
<svg class="abs" style="left:0;top:0;pointer-events:none" width="1336" height="845" viewBox="0 0 1336 845"><polygon points="1169.2,215.8 1172.6,227.1 1173.0,223.3 1223.4,273.9 1269.3,320.0 1270.3,319.0 1225.6,271.8 1176.6,219.8 1180.4,219.6" fill="#b600dc"/><polygon points="1120.2,323.1 1129.4,330.5 1127.5,327.2 1193.1,339.7 1253.3,351.3 1253.5,349.9 1193.8,336.7 1128.5,322.3 1131.6,319.9" fill="#b600dc"/><polygon points="1065.5,405.9 1075.2,412.6 1073.1,409.4 1177.1,422.2 1268.7,433.4 1268.9,432.0 1177.5,419.1 1073.8,404.5 1076.6,401.9" fill="#b600dc"/><polygon points="1059.9,475.1 1070.5,480.2 1068.0,477.4 1182.9,473.6 1283.5,470.2 1283.5,468.8 1182.8,470.5 1067.8,472.4 1070.3,469.4" fill="#b600dc"/><polygon points="1168.3,602.4 1179.6,599.0 1175.8,598.6 1218.7,555.9 1258.5,516.4 1257.5,515.4 1216.6,553.7 1172.3,595.0 1172.1,591.2" fill="#b600dc"/><circle cx="1260" cy="269.5" r="11" fill="#b600dc"/><text x="1260" y="274.0" text-anchor="middle" font-family="Liberation Sans, sans-serif" font-size="15.5" fill="#fff">1</text><circle cx="1225.9" cy="325.9" r="11" fill="#b600dc"/><text x="1225.9" y="330.4" text-anchor="middle" font-family="Liberation Sans, sans-serif" font-size="15.5" fill="#fff">2</text><circle cx="1244.3" cy="412.4" r="11" fill="#b600dc"/><text x="1244.3" y="416.9" text-anchor="middle" font-family="Liberation Sans, sans-serif" font-size="15.5" fill="#fff">3</text><circle cx="1223.8" cy="456.5" r="11" fill="#b600dc"/><text x="1223.8" y="461.0" text-anchor="middle" font-family="Liberation Sans, sans-serif" font-size="15.5" fill="#fff">4</text><circle cx="1229.6" cy="529.3" r="11" fill="#b600dc"/><text x="1229.6" y="533.8" text-anchor="middle" font-family="Liberation Sans, sans-serif" font-size="15.5" fill="#fff">5</text></svg>
</body>
</html>
